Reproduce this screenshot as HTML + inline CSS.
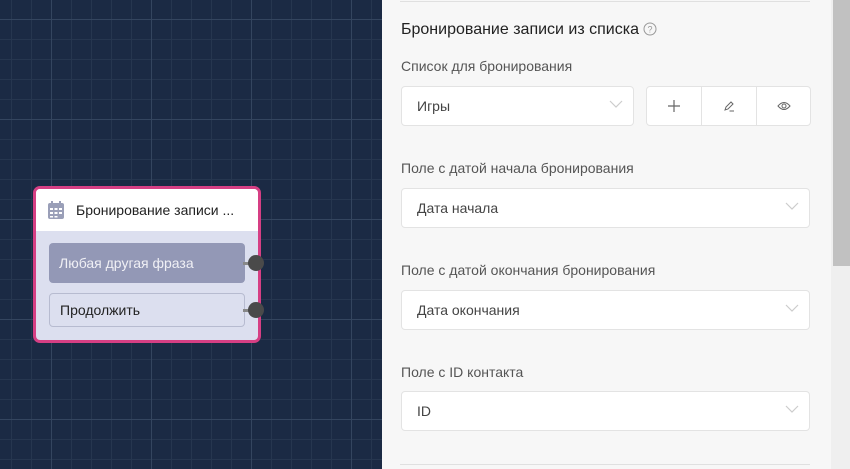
<!DOCTYPE html>
<html><head><meta charset="utf-8"><style>
*{box-sizing:border-box;margin:0;padding:0}
body{width:850px;height:469px;overflow:hidden;font-family:"Liberation Sans","Noto Sans CJK SC",sans-serif;position:relative;background:#1b2a44}
#canvas{position:absolute;left:0;top:0;width:382px;height:469px;background-color:#1b2a44;
background-image:linear-gradient(#34455f 1px,transparent 1px),linear-gradient(90deg,#34455f 1px,transparent 1px),linear-gradient(#26364f 1px,transparent 1px),linear-gradient(90deg,#26364f 1px,transparent 1px);
background-size:100px 100px,100px 100px,20px 20px,20px 20px;background-position:0 19px,51px 0,0 19px,11px 0}
.node{position:absolute;left:33px;top:186px;width:228px;height:157px;border:3px solid #d63f84;border-radius:7px;background:#dcdfef;overflow:visible}
.nh{height:42px;background:#fff;border-radius:4px 4px 0 0;display:flex;align-items:center;padding-left:12px;font-size:14px;color:#222}
.nh svg{margin-right:12px}
.b{position:absolute;left:13px;width:196px;height:40px;border-radius:4px;font-size:14px;display:flex;align-items:center;padding-left:10px}
.b1{top:54px;background:#9398b6;color:#f0f0f5}
.b2{top:104px;height:34px;border:1px solid #b7bbd0;color:#222;left:13px}
.dot{position:absolute;width:16px;height:16px;border-radius:50%;background:#4a4a4a;left:212px}
.lnk{position:absolute;width:6px;height:3px;background:#888;left:207px}
#panel{position:absolute;left:382px;top:0;width:449px;height:469px;background:#f7f7f7}
.hr{position:absolute;left:18px;width:410px;height:1px;background:#e0e0e0}
.t{position:absolute;left:19px;font-size:14px;color:#555}
.sel{position:absolute;left:19px;width:409px;height:40px;background:#fff;border:1px solid #e3e3e3;border-radius:4px;font-size:14px;color:#444;padding-left:15px;display:flex;align-items:center}
.chev{position:absolute;right:10px;top:13px}
#sb{position:absolute;left:831px;top:0;width:19px;height:469px;background:#efefef}
#th{position:absolute;left:833px;top:0;width:17px;height:266px;background:#c1c1c1}
</style></head><body>
<div id="canvas">
<div class="node">
<div class="nh"><svg width="16" height="18" viewBox="0 0 16 18"><rect x="3" y="0" width="2" height="4" fill="#9a9fb8"/><rect x="11" y="0" width="2" height="4" fill="#9a9fb8"/><rect x="0" y="2" width="16" height="16" rx="2" fill="#9a9fb8"/><g fill="#fff"><rect x="2" y="7" width="3" height="2"/><rect x="6.5" y="7" width="3" height="2"/><rect x="11" y="7" width="3" height="2"/><rect x="2" y="11" width="3" height="2"/><rect x="6.5" y="11" width="3" height="2"/><rect x="11" y="11" width="3" height="2"/><rect x="2" y="15" width="3" height="1.5"/><rect x="6.5" y="15" width="3" height="1.5"/></g></svg>Бронирование записи ...</div>
<div class="b b1">Любая другая фраза</div>
<div class="lnk" style="top:73px"></div><div class="dot" style="top:66px"></div>
<div class="b b2">Продолжить</div>
<div class="lnk" style="top:120px"></div><div class="dot" style="top:113px"></div>
</div>
</div>
<div id="panel">
<div class="hr" style="top:1px"></div>
<div class="t" style="top:21px;font-size:16px;color:#222">Бронирование записи из списка <svg width="14" height="14" viewBox="0 0 14 14" style="vertical-align:-2px"><circle cx="7" cy="7" r="6" fill="none" stroke="#999" stroke-width="1"/><text x="7" y="10.3" font-size="9" text-anchor="middle" fill="#999" font-family="Liberation Sans">?</text></svg></div>
<div class="t" style="top:58px">Список для бронирования</div>
<div class="sel" style="top:86px;width:233px">Игры<svg class="chev" width="14" height="8" viewBox="0 0 14 8"><path d="M1 1l6 6 6-6" fill="none" stroke="#ccc" stroke-width="1.2"/></svg></div>
<div class="sel" style="top:86px;left:264px;width:165px;padding:0">
<div style="width:55px;height:100%;display:flex;align-items:center;justify-content:center;border-right:1px solid #e3e3e3"><svg width="12" height="12"><path d="M6 0v12M0 6h12" stroke="#666" stroke-width="1.2"/></svg></div>
<div style="width:55px;height:100%;display:flex;align-items:center;justify-content:center;border-right:1px solid #e3e3e3"><svg width="12" height="12" viewBox="0 0 12 12"><path d="M2 10L3 7 8 2 10 4 5 9ZM6.5 11H11" fill="none" stroke="#666" stroke-width="1"/></svg></div>
<div style="flex:1;height:100%;display:flex;align-items:center;justify-content:center"><svg width="14" height="10" viewBox="0 0 14 10"><path d="M1 5Q7 -2 13 5Q7 12 1 5Z" fill="none" stroke="#666" stroke-width="1"/><circle cx="7" cy="5" r="2" fill="none" stroke="#666"/></svg></div>
</div>
<div class="t" style="top:160px">Поле с датой начала бронирования</div>
<div class="sel" style="top:188px">Дата начала<svg class="chev" width="14" height="8" viewBox="0 0 14 8"><path d="M1 1l6 6 6-6" fill="none" stroke="#ccc" stroke-width="1.2"/></svg></div>
<div class="t" style="top:262px">Поле с датой окончания бронирования</div>
<div class="sel" style="top:290px">Дата окончания<svg class="chev" width="14" height="8" viewBox="0 0 14 8"><path d="M1 1l6 6 6-6" fill="none" stroke="#ccc" stroke-width="1.2"/></svg></div>
<div class="t" style="top:364px">Поле с ID контакта</div>
<div class="sel" style="top:391px">ID<svg class="chev" width="14" height="8" viewBox="0 0 14 8"><path d="M1 1l6 6 6-6" fill="none" stroke="#ccc" stroke-width="1.2"/></svg></div>
<div class="hr" style="top:464px"></div>
</div>
<div id="sb"></div><div id="th"></div>
</body></html>
